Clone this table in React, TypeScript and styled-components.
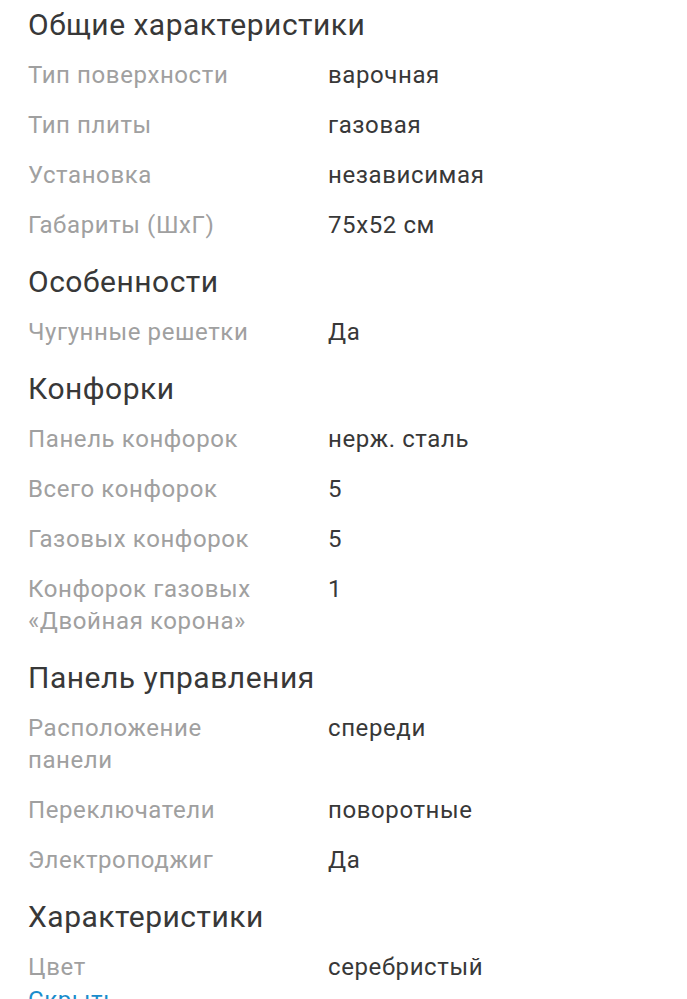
import React from "react";
import styled, { createGlobalStyle } from "styled-components";

const Global = createGlobalStyle`
  html, body { margin: 0; padding: 0; background: #ffffff; }
  body { font-family: Roboto, "Noto Sans", Arial, sans-serif; -webkit-font-smoothing: antialiased; }
`;

const Page = styled.div`
  padding: 5px 0 0 28px;
  height: 999px;
  overflow: hidden;
  box-sizing: border-box;
`;

const Section = styled.section`
  & + & { margin-top: 12px; }
`;

const Heading = styled.h2`
  margin: 0 0 5px 0;
  font-size: 30px;
  line-height: 40px;
  font-weight: 400;
  letter-spacing: 0.5px;
  color: #383838;
`;

const Row = styled.div`
  display: grid;
  grid-template-columns: 300px 1fr;
  padding: 9px 0;
  font-size: 24px;
  line-height: 32px;
  letter-spacing: 0.6px;
`;

const Label = styled.div`
  color: #a0a0a0;
  padding-right: 40px;
`;

const Value = styled.div`
  color: #383838;
`;

const Toggle = styled.a`
  display: block;
  margin-top: -8px;
  font-size: 24px;
  line-height: 32px;
  letter-spacing: 0.6px;
  color: #1a8ccc;
  text-decoration: none;
`;

type Spec = { label: string; value: string };
type Group = { title: string; rows: Spec[] };

const groups: Group[] = [
  {
    title: "Общие характеристики",
    rows: [
      { label: "Тип поверхности", value: "варочная" },
      { label: "Тип плиты", value: "газовая" },
      { label: "Установка", value: "независимая" },
      { label: "Габариты (ШхГ)", value: "75x52 см" },
    ],
  },
  { title: "Особенности", rows: [{ label: "Чугунные решетки", value: "Да" }] },
  {
    title: "Конфорки",
    rows: [
      { label: "Панель конфорок", value: "нерж. сталь" },
      { label: "Всего конфорок", value: "5" },
      { label: "Газовых конфорок", value: "5" },
      { label: "Конфорок газовых «Двойная корона»", value: "1" },
    ],
  },
  {
    title: "Панель управления",
    rows: [
      { label: "Расположение панели", value: "спереди" },
      { label: "Переключатели", value: "поворотные" },
      { label: "Электроподжиг", value: "Да" },
    ],
  },
  { title: "Характеристики", rows: [{ label: "Цвет", value: "серебристый" }] },
];

export default function App() {
  return (
    <>
      <Global />
      <Page>
        {groups.map((g) => (
          <Section key={g.title}>
            <Heading>{g.title}</Heading>
            {g.rows.map((r) => (
              <Row key={r.label}>
                <Label>{r.label}</Label>
                <Value>{r.value}</Value>
              </Row>
            ))}
          </Section>
        ))}
        <Toggle href="#">Скрыть</Toggle>
      </Page>
    </>
  );
}
